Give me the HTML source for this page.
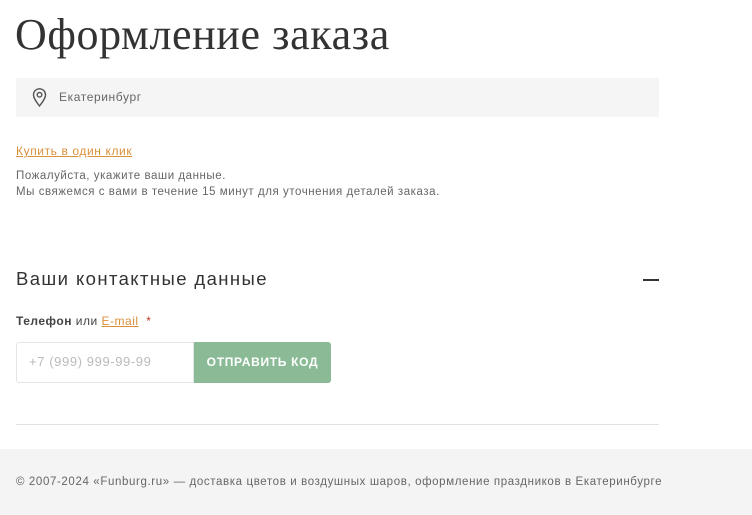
<!DOCTYPE html>
<html><head><meta charset="utf-8"><style>
body{margin:0;width:752px;height:515px;background:#fff;font-family:"Liberation Sans",sans-serif;color:#333;position:relative;overflow:hidden}
.a{position:absolute;white-space:nowrap}
h1{position:absolute;left:15px;top:9px;margin:0;font-family:"Liberation Serif",serif;font-weight:normal;font-size:44px;color:#333;letter-spacing:0.6px}
.city{position:absolute;left:16px;top:78px;width:643px;height:39px;background:#f5f5f5}
.footer{position:absolute;left:0;top:449px;width:752px;height:66px;background:#f4f4f4}
</style></head><body>
<h1>Оформление заказа</h1>
<div class="city">
<svg style="position:absolute;left:16px;top:10px" width="15" height="19" viewBox="0 0 15 19"><path d="M7.5 18C4 13.5 1.5 10 1.5 6.8A6 6 0 0 1 13.5 6.8C13.5 10 11 13.5 7.5 18Z" fill="none" stroke="#555" stroke-width="1.4"/><circle cx="7.5" cy="6.8" r="2.3" fill="none" stroke="#555" stroke-width="1.4"/></svg>
<div class="a" style="left:43px;top:12px;font-size:12px;color:#666;letter-spacing:0.6px">Екатеринбург</div>
</div>
<div class="a" style="left:16px;top:144px;font-size:12px;color:#d9903a;text-decoration:underline;letter-spacing:0.6px">Купить в один клик</div>
<div class="a" style="left:16px;top:168px;font-size:11.5px;color:#666;line-height:16px;letter-spacing:0.55px">Пожалуйста, укажите ваши данные.<br>Мы свяжемся с вами в течение 15 минут для уточнения деталей заказа.</div>
<div class="a" style="left:16px;top:268px;font-size:18.5px;color:#333;letter-spacing:1.4px">Ваши контактные данные</div>
<div class="a" style="left:643px;top:279px;width:16px;height:2px;background:#333"></div>
<div class="a" style="left:16px;top:314px;font-size:12px;color:#444;letter-spacing:0.5px"><b>Телефон</b> или <span style="color:#d9903a;text-decoration:underline">E-mail</span> &nbsp;<span style="color:#c0392b">*</span></div>
<div class="a" style="left:16px;top:342px;width:176px;height:39px;border:1px solid #e4e4e4;border-radius:3px 0 0 3px"></div>
<div class="a" style="left:29px;top:354px;font-size:13px;color:#bbb;letter-spacing:0.6px">+7 (999) 999-99-99</div>
<div class="a" style="left:194px;top:342px;width:137px;height:41px;background:#8bbb96;border-radius:0 3px 3px 0;color:#fff;font-weight:bold;font-size:12px;text-align:center;line-height:41px;letter-spacing:0.7px">ОТПРАВИТЬ КОД</div>
<div class="a" style="left:16px;top:424px;width:643px;height:1px;background:#e2e2e2"></div>
<div class="footer"><div class="a" style="left:16px;top:27px;font-size:11.5px;color:#666;letter-spacing:0.62px">© 2007-2024 «Funburg.ru» — доставка цветов и воздушных шаров, оформление праздников в Екатеринбурге</div></div>
</body></html>
